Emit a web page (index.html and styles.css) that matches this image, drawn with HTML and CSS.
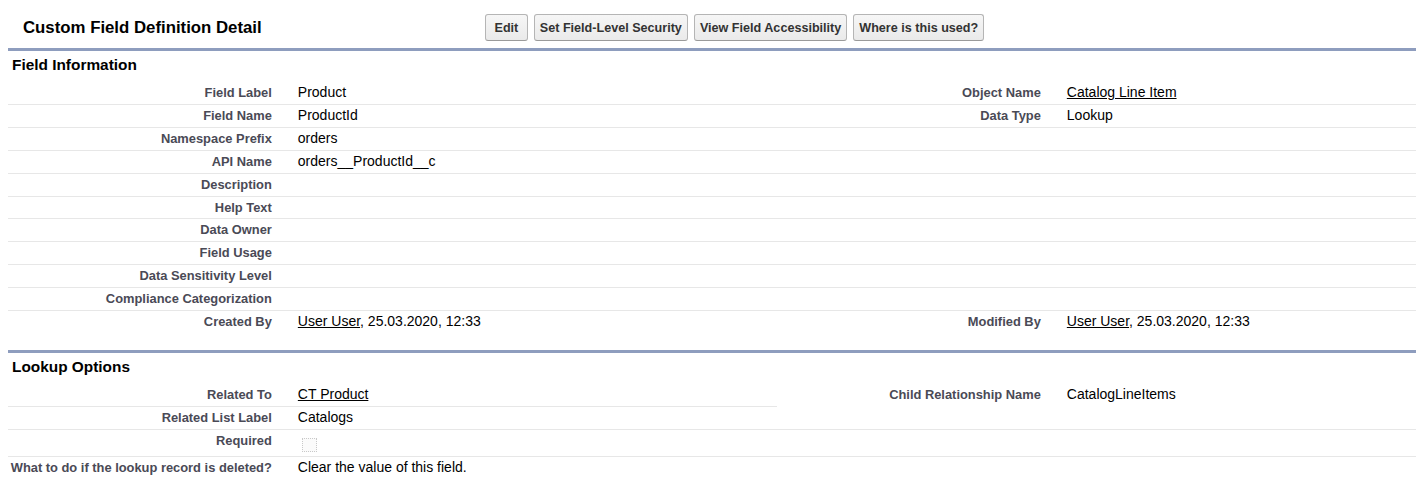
FILE: index.html
```html
<!DOCTYPE html>
<html>
<head>
<meta charset="utf-8">
<title>Custom Field Definition Detail</title>
<link rel="stylesheet" href="styles.css">
</head>
<body>
<div class="page">
  <div class="pb-header">
    <div class="pb-title"><h2 class="main-title">Custom Field Definition Detail</h2></div>
    <div class="pb-buttons">
      <button class="btn btn-edit">Edit</button>
      <button class="btn">Set Field-Level Security</button>
      <button class="btn">View Field Accessibility</button>
      <button class="btn">Where is this used?</button>
    </div>
  </div>

  <div class="section">
    <h3 class="sub-header">Field Information</h3>
    <div class="detail-list">
      <div class="row">
        <div class="cell label">Field Label</div><div class="cell data">Product</div>
        <div class="cell label">Object Name</div><div class="cell data"><a class="link" href="#">Catalog Line Item</a></div>
      </div>
      <div class="row">
        <div class="cell label">Field Name</div><div class="cell data">ProductId</div>
        <div class="cell label">Data Type</div><div class="cell data">Lookup</div>
      </div>
      <div class="row">
        <div class="cell label">Namespace Prefix</div><div class="cell data">orders</div>
        <div class="cell label"></div><div class="cell data"></div>
      </div>
      <div class="row">
        <div class="cell label">API Name</div><div class="cell data">orders__ProductId__c</div>
        <div class="cell label"></div><div class="cell data"></div>
      </div>
      <div class="row">
        <div class="cell label">Description</div><div class="cell data"></div>
        <div class="cell label"></div><div class="cell data"></div>
      </div>
      <div class="row">
        <div class="cell label">Help Text</div><div class="cell data"></div>
        <div class="cell label"></div><div class="cell data"></div>
      </div>
      <div class="row">
        <div class="cell label">Data Owner</div><div class="cell data"></div>
        <div class="cell label"></div><div class="cell data"></div>
      </div>
      <div class="row">
        <div class="cell label">Field Usage</div><div class="cell data"></div>
        <div class="cell label"></div><div class="cell data"></div>
      </div>
      <div class="row">
        <div class="cell label">Data Sensitivity Level</div><div class="cell data"></div>
        <div class="cell label"></div><div class="cell data"></div>
      </div>
      <div class="row">
        <div class="cell label">Compliance Categorization</div><div class="cell data"></div>
        <div class="cell label"></div><div class="cell data"></div>
      </div>
      <div class="row last">
        <div class="cell label">Created By</div><div class="cell data"><a class="link" href="#">User User</a>, 25.03.2020, 12:33</div>
        <div class="cell label">Modified By</div><div class="cell data"><a class="link" href="#">User User</a>, 25.03.2020, 12:33</div>
      </div>
    </div>
  </div>

  <div class="section section-gap">
    <h3 class="sub-header">Lookup Options</h3>
    <div class="detail-list">
      <div class="row">
        <div class="cell label">Related To</div><div class="cell data"><a class="link" href="#">CT Product</a></div>
        <div class="cell label no-border">Child Relationship Name</div><div class="cell data no-border">CatalogLineItems</div>
      </div>
      <div class="row">
        <div class="cell label">Related List Label</div><div class="cell data">Catalogs</div>
        <div class="cell label"></div><div class="cell data"></div>
      </div>
      <div class="row">
        <div class="cell label">Required</div><div class="cell data"><span class="checkbox"></span></div>
        <div class="cell label"></div><div class="cell data"></div>
      </div>
      <div class="row last">
        <div class="cell label">What to do if the lookup record is deleted?</div><div class="cell data">Clear the value of this field.</div>
        <div class="cell label"></div><div class="cell data"></div>
      </div>
    </div>
  </div>
</div>
</body>
</html>
```

FILE: styles.css
```css
html, body {
  margin: 0;
  padding: 0;
  background: #ffffff;
}

body {
  font-family: "Liberation Sans", Arial, sans-serif;
  font-size: 14px;
  color: #000000;
}

.page {
  width: 1408px;
  padding: 14px 0 0 8px;
}

.pb-header {
  display: flex;
  align-items: center;
  height: 27px;
  margin-bottom: 7px;
}

.pb-title {
  width: 477px;
  flex: none;
  box-sizing: border-box;
  padding-left: 15px;
}

.main-title {
  margin: 0;
  font-size: 16.8px;
  font-weight: bold;
  line-height: 20px;
  color: #000000;
}

.pb-buttons {
  display: flex;
  gap: 6px;
}

.btn {
  height: 27px;
  box-sizing: border-box;
  padding: 0 5px;
  font-family: "Liberation Sans", Arial, sans-serif;
  font-size: 12.6px;
  font-weight: bold;
  color: #333333;
  background: linear-gradient(#f6f6f6, #eaeaea);
  border: 1px solid #b5b5b5;
  border-bottom-color: #9a9a9a;
  border-radius: 3px;
  cursor: pointer;
  white-space: nowrap;
}

.btn-edit {
  padding: 0 8.5px;
}

.section {
  border-top: 3px solid #8e9dbe;
}

.section-gap {
  margin-top: 16px;
}

.sub-header {
  margin: 0;
  padding: 4px 4px 8px;
  font-size: 15.4px;
  font-weight: bold;
  line-height: 19px;
  color: #000000;
}

.row {
  display: grid;
  grid-template-columns: 276.84px 492.16px 276.84px 1fr;
}

.cell {
  padding: 3px 0;
  line-height: 15.9px;
  min-height: 15.9px;
  border-bottom: 1px solid #e7e7e7;
}

.row.last .cell {
  border-bottom-color: transparent;
}

.cell.no-border {
  border-bottom-color: transparent;
}

.label {
  display: flex;
  justify-content: flex-end;
  padding-right: 13px;
  font-size: 12.88px;
  font-weight: bold;
  color: #4a4a56;
  white-space: nowrap;
}

.data {
  padding-left: 13px;
  color: #000000;
  white-space: nowrap;
}

.link {
  color: #000000;
  text-decoration: underline;
}

.checkbox {
  display: block;
  width: 15px;
  height: 14px;
  box-sizing: border-box;
  margin: 5px 0 1px 4px;
  border: 1px dotted #c9c9c9;
  background: #fbfbfb;
}
```
